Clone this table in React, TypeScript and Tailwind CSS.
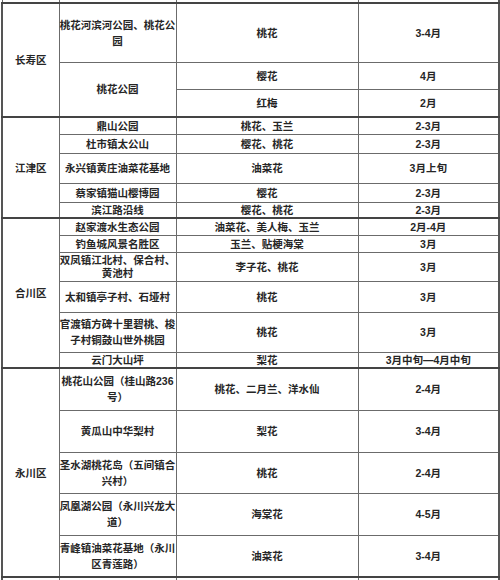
import React from "react";

type Row = {
  h: number;
  district?: { name: string; span: number };
  place?: { lines: string[]; span?: number; lh?: number };
  flower: string;
  time: string;
  groupEnd?: boolean;
};

const rows: Row[] = [
  { h: 59, district: { name: "长寿区", span: 3 }, place: { lines: ["桃花河滨河公园、桃花公", "园"] }, flower: "桃花", time: "3-4月" },
  { h: 27, place: { lines: ["桃花公园"], span: 2 }, flower: "樱花", time: "4月" },
  { h: 28, flower: "红梅", time: "2月", groupEnd: true },
  { h: 17, district: { name: "江津区", span: 5 }, place: { lines: ["鼎山公园"] }, flower: "桃花、玉兰", time: "2-3月" },
  { h: 19, place: { lines: ["杜市镇太公山"] }, flower: "樱花、桃花", time: "2-3月" },
  { h: 30, place: { lines: ["永兴镇黄庄油菜花基地"] }, flower: "油菜花", time: "3月上旬" },
  { h: 19, place: { lines: ["蔡家镇猫山樱博园"] }, flower: "樱花", time: "2-3月" },
  { h: 16, place: { lines: ["滨江路沿线"] }, flower: "樱花、桃花", time: "2-3月", groupEnd: true },
  { h: 17, district: { name: "合川区", span: 6 }, place: { lines: ["赵家渡水生态公园"] }, flower: "油菜花、美人梅、玉兰", time: "2月-4月" },
  { h: 17, place: { lines: ["钓鱼城风景名胜区"] }, flower: "玉兰、贴梗海棠", time: "3月" },
  { h: 29, place: { lines: ["双凤镇江北村、保合村、", "黄池村"], lh: 13 }, flower: "李子花、桃花", time: "3月" },
  { h: 31, place: { lines: ["太和镇亭子村、石垭村"] }, flower: "桃花", time: "3月" },
  { h: 40, place: { lines: ["官渡镇方碑十里碧桃、梭", "子村铜鼓山世外桃园"] }, flower: "桃花", time: "3月" },
  { h: 16, place: { lines: ["云门大山坪"] }, flower: "梨花", time: "3月中旬—4月中旬", groupEnd: true },
  { h: 42, district: { name: "永川区", span: 5 }, place: { lines: ["桃花山公园（桂山路236", "号）"] }, flower: "桃花、二月兰、洋水仙", time: "2-4月" },
  { h: 42, place: { lines: ["黄瓜山中华梨村"] }, flower: "梨花", time: "3-4月" },
  { h: 41, place: { lines: ["圣水湖桃花岛（五间镇合", "兴村）"] }, flower: "桃花", time: "2-4月" },
  { h: 42, place: { lines: ["凤凰湖公园（永川兴龙大", "道）"] }, flower: "海棠花", time: "4-5月" },
  { h: 42, place: { lines: ["青峰镇油菜花基地（永川", "区青莲路）"] }, flower: "油菜花", time: "3-4月", groupEnd: true },
];

const cell = "border border-[#6b6b6b] p-0 text-center align-middle";

export default function App() {
  return (
    <div
      className="w-[500px] h-[580px] overflow-hidden bg-white text-[#262626] font-bold text-[10.5px] leading-[12px]"
      style={{ fontFamily: '"Liberation Sans", "Noto Sans CJK SC", sans-serif' }}
    >
      <table className="table-fixed border-collapse ml-[1px] w-[497px] border-r-2 border-[#555]">
        <colgroup>
          <col className="w-[57px]" />
          <col className="w-[117px]" />
          <col className="w-[182px]" />
          <col className="w-[141px]" />
        </colgroup>
        <tbody>
          <tr className="h-[3px]">
            <td className={`${cell} border-t-0 border-b-2 border-b-[#444]`}></td>
            <td className={`${cell} border-t-0 border-b-2 border-b-[#444]`}></td>
            <td className={`${cell} border-t-0 border-b-2 border-b-[#444]`}></td>
            <td className={`${cell} border-t-0 border-b-2 border-b-[#444]`}></td>
          </tr>
          {rows.map((r, i) => {
            const b = r.groupEnd ? "border-b-2 border-b-[#444]" : "";
            return (
              <tr key={i} style={{ height: r.h }}>
                {r.district && (
                  <td rowSpan={r.district.span} className={`${cell} border-b-2 border-b-[#444] border-l-2 border-l-[#555]`}>
                    {r.district.name}
                  </td>
                )}
                {r.place && (
                  <td rowSpan={r.place.span ?? 1} className={`${cell} ${b} ${r.place.span ? "border-b-2 border-b-[#444]" : ""}`}>
                    {r.place.lines.map((l, j) => (
                      <div
                        key={j}
                        className="whitespace-nowrap"
                        style={r.place!.lines.length > 1 ? { lineHeight: `${r.place!.lh ?? 16}px` } : undefined}
                      >
                        {l}
                      </div>
                    ))}
                  </td>
                )}
                <td className={`${cell} ${b}`}>{r.flower}</td>
                <td className={`${cell} ${b}`}>{r.time}</td>
              </tr>
            );
          })}
          <tr className="h-[3px]">
            <td className={`${cell} border-b-0 border-l-2 border-l-[#555]`}></td>
            <td className={`${cell} border-b-0`}></td>
            <td className={`${cell} border-b-0`}></td>
            <td className={`${cell} border-b-0`}></td>
          </tr>
        </tbody>
      </table>
    </div>
  );
}
